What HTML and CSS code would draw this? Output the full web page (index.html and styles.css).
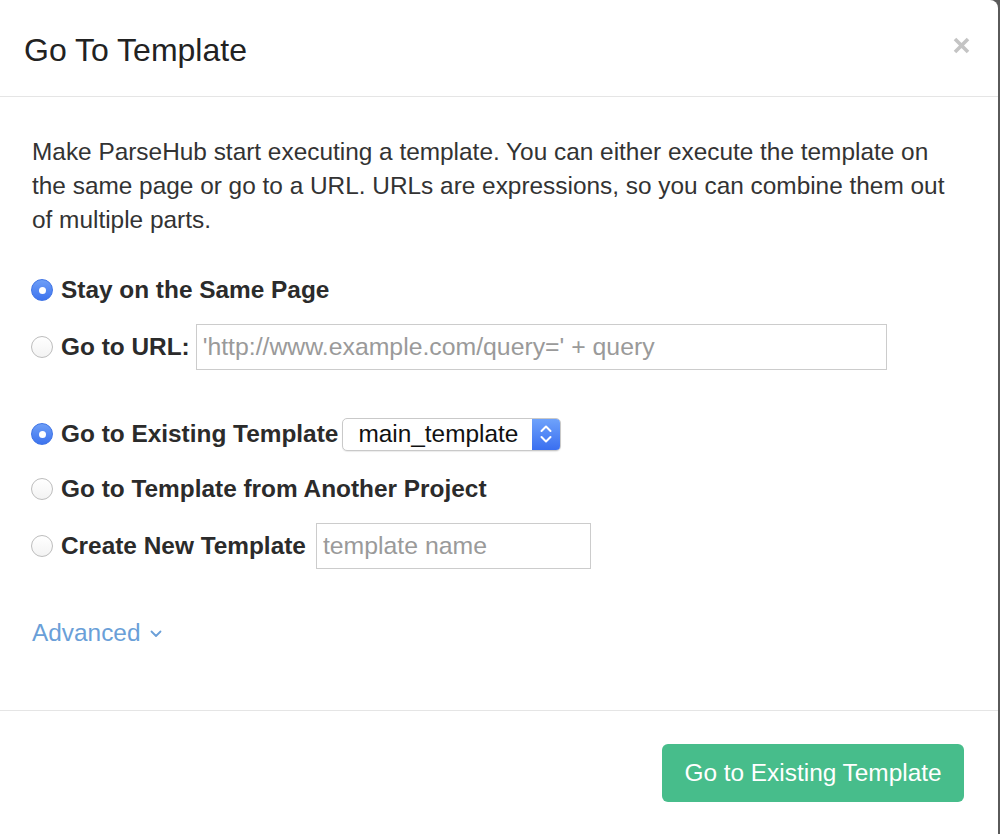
FILE: index.html
```html
<!DOCTYPE html>
<html>
<head>
<meta charset="utf-8">
<link rel="stylesheet" href="styles.css">
</head>
<body>
<div class="modal">
  <div class="modal-header">
    <h1 class="title">Go To Template</h1>
    <button class="close" aria-label="Close">
      <svg width="17" height="17" viewBox="0 0 17 17"><path d="M2 2 L15 15 M15 2 L2 15" stroke="#c4c4c4" stroke-width="3.6" stroke-linecap="butt"/></svg>
    </button>
  </div>
  <div class="modal-body">
    <p class="intro">Make ParseHub start executing a template. You can either execute the template on the same page or go to a URL. URLs are expressions, so you can combine them out of multiple parts.</p>
    <div class="row row-1">
      <span class="radio checked"></span>
      <span class="label">Stay on the Same Page</span>
    </div>
    <div class="row row-2">
      <span class="radio"></span>
      <span class="label">Go to URL:</span>
      <input class="text-input url-input" type="text" placeholder="'http://www.example.com/query=' + query">
    </div>
    <div class="row row-3">
      <span class="radio checked"></span>
      <span class="label">Go to Existing Template</span>
      <div class="select">
        <span class="select-value">main_template</span>
        <span class="select-arrows">
          <svg width="14" height="22" viewBox="0 0 14 22"><path d="M2.5 8 L7 3.5 L11.5 8 M2.5 14 L7 18.5 L11.5 14" fill="none" stroke="#fff" stroke-width="2" stroke-linecap="round" stroke-linejoin="round"/></svg>
        </span>
      </div>
    </div>
    <div class="row row-4">
      <span class="radio"></span>
      <span class="label">Go to Template from Another Project</span>
    </div>
    <div class="row row-5">
      <span class="radio"></span>
      <span class="label">Create New Template</span>
      <input class="text-input name-input" type="text" placeholder="template name">
    </div>
    <a class="advanced" href="#">Advanced <svg class="chev" width="12" height="8" viewBox="0 0 12 8"><path d="M1.5 1.5 L6 6 L10.5 1.5" fill="none" stroke="#6a9fd8" stroke-width="1.8" stroke-linecap="round" stroke-linejoin="round"/></svg></a>
  </div>
  <div class="modal-footer">
    <button class="primary">Go to Existing Template</button>
  </div>
</div>
</body>
</html>
```

FILE: styles.css
```css
html, body {
  margin: 0;
  padding: 0;
  background: #5a5a5a;
}
body {
  font-family: "Liberation Sans", Arial, sans-serif;
  color: #333;
}
.modal {
  width: 998px;
  height: 834px;
  background: #fff;
  border-top-right-radius: 8px;
  display: flex;
  flex-direction: column;
  overflow: hidden;
}
.modal-header {
  height: 96px;
  border-bottom: 1px solid #e5e5e5;
  display: flex;
  align-items: center;
  justify-content: space-between;
  padding: 0 28px 0 24px;
  box-sizing: content-box;
  flex: none;
}
.title {
  margin: 0;
  font-size: 32px;
  font-weight: normal;
  color: #222;
  line-height: 1;
  padding-top: 4px;
}
.close {
  border: 0;
  background: none;
  padding: 0;
  margin-top: -6px;
  display: flex;
}
.modal-body {
  padding: 38px 32px 60px 32px;
  border-bottom: 1px solid #e5e5e5;
  flex: none;
}
.intro {
  margin: 0 0 36px 0;
  font-size: 24.4px;
  line-height: 34px;
  color: #333;
}
.row {
  display: flex;
  align-items: center;
}
.row-1 { height: 34px; }
.row-2 { height: 46px; margin-top: 17px; }
.row-3 { height: 34px; margin-top: 47px; }
.row-4 { height: 34px; margin-top: 21px; }
.row-5 { height: 46px; margin-top: 17px; }
.radio {
  width: 22px;
  height: 22px;
  box-sizing: border-box;
  border-radius: 50%;
  border: 1px solid #bdbdbd;
  background: linear-gradient(#ffffff, #f3f3f3);
  margin-right: 8px;
  margin-left: -1px;
  flex: none;
  position: relative;
}
.radio.checked {
  border: 1px solid #3f74e6;
  background: linear-gradient(#6d9ef7, #3d73ee);
}
.radio.checked::after {
  content: "";
  position: absolute;
  left: 50%;
  top: 50%;
  width: 7px;
  height: 7px;
  margin: -3.5px 0 0 -3.5px;
  border-radius: 50%;
  background: #fff;
}
.label {
  font-size: 24.4px;
  font-weight: bold;
  color: #2b2b2b;
  white-space: nowrap;
}
.text-input {
  height: 46px;
  box-sizing: border-box;
  border: 1px solid #cccccc;
  border-radius: 0;
  font-family: "Liberation Sans", Arial, sans-serif;
  font-size: 24.8px;
  padding: 0 6px;
  color: #333;
  outline: none;
}
.text-input::placeholder {
  color: #9a9a9a;
}
.url-input { width: 691px; margin-left: 6px; }
.name-input { width: 275px; margin-left: 10px; }
.select {
  margin-left: 4px;
  width: 219px;
  height: 33px;
  box-sizing: border-box;
  border: 1px solid #c9c9c9;
  border-radius: 5px;
  background: #fff;
  display: flex;
  align-items: stretch;
  overflow: hidden;
  box-shadow: 0 1px 1px rgba(0,0,0,0.08);
  flex: none;
}
.select-value {
  flex: 1;
  font-size: 24.4px;
  color: #111;
  padding-left: 15px;
  display: flex;
  align-items: center;
  line-height: 1;
}
.select-arrows {
  width: 28px;
  background: linear-gradient(#6ea2fb, #3a6ff0);
  display: flex;
  align-items: center;
  justify-content: center;
}
.advanced {
  display: flex;
  width: max-content;
  align-items: center;
  margin-top: 47px;
  height: 34px;
  font-size: 24.4px;
  color: #6a9fd8;
  text-decoration: none;
}
.chev {
  margin-left: 10px;
  margin-top: 2px;
}
.modal-footer {
  flex: 1;
  display: flex;
  justify-content: flex-end;
  align-items: flex-start;
  padding: 33px 34px 0 0;
}
.primary {
  width: 302px;
  height: 58px;
  border: 0;
  border-radius: 6px;
  background: #47bd8b;
  color: #fff;
  font-family: "Liberation Sans", Arial, sans-serif;
  font-size: 24.4px;
  padding: 0;
}
```
